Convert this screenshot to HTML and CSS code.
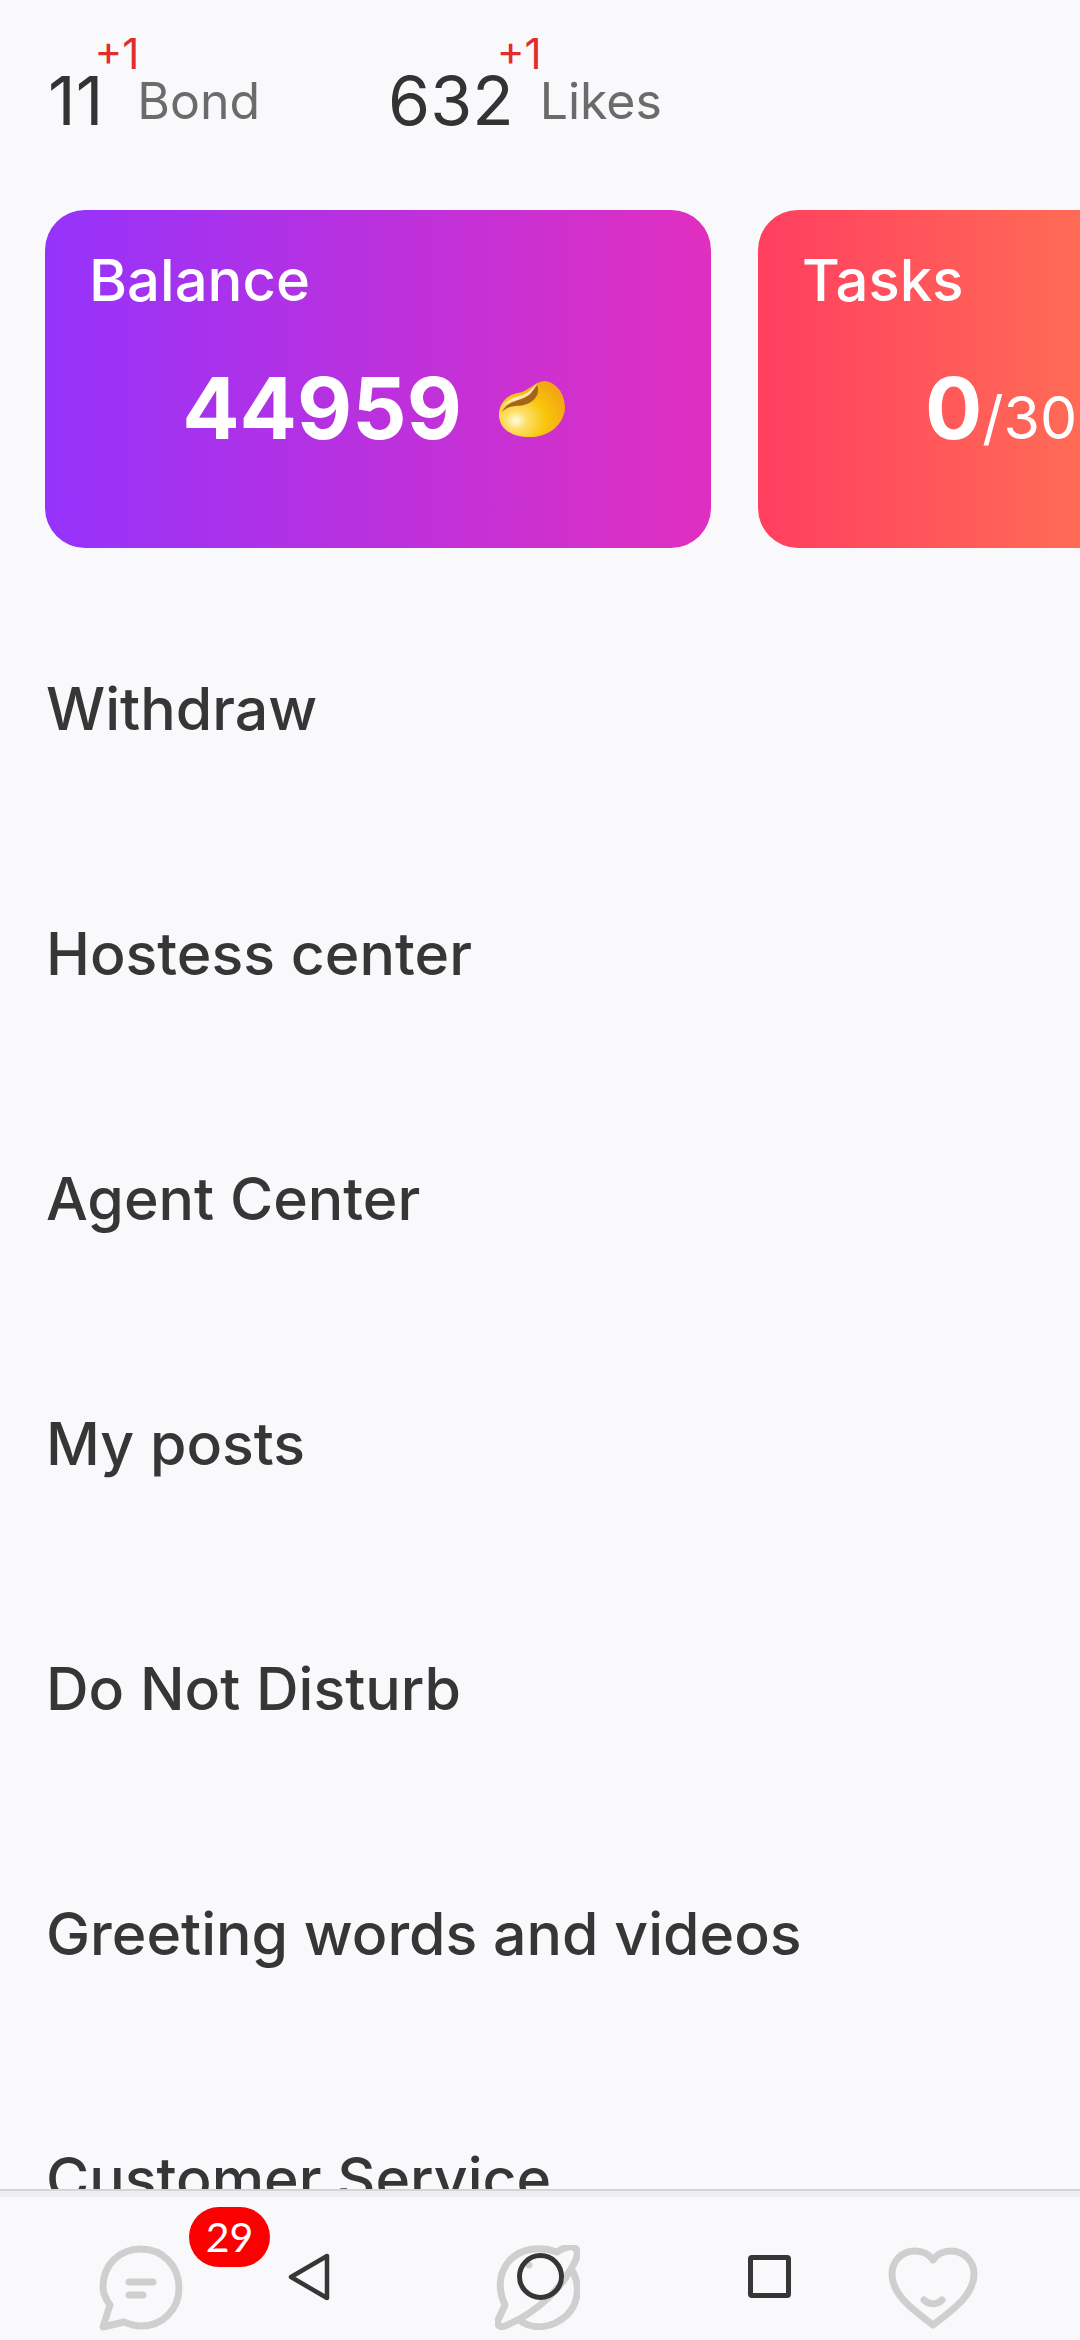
FILE: index.html
```html
<!DOCTYPE html>
<html lang="en">
<head>
  <meta charset="UTF-8">
  <meta name="viewport" content="width=device-width, initial-scale=1.0">
  <title>Profile</title>
  <link rel="stylesheet" href="styles.css">
</head>
<body>
  <div class="page">
    <div class="stats">
      <div class="stat stat-bond">
        <span class="stat-num">11<span class="stat-plus">+1</span></span>
        <span class="stat-label">Bond</span>
      </div>
      <div class="stat">
        <span class="stat-num">632<span class="stat-plus">+1</span></span>
        <span class="stat-label">Likes</span>
      </div>
    </div>

    <div class="cards">
      <div class="card card-balance">
        <div class="card-title">Balance</div>
        <div class="card-value">
          <span class="card-num">44959</span>
          <svg class="bean" width="68" height="58" viewBox="0 0 68 58">
            <defs>
              <radialGradient id="beanFill" cx="0.26" cy="0.7" r="0.8">
                <stop offset="0" stop-color="#fffbe8"/>
                <stop offset="0.2" stop-color="#fde06a"/>
                <stop offset="0.55" stop-color="#f8c60c"/>
                <stop offset="1" stop-color="#f3a612"/>
              </radialGradient>
            </defs>
            <path d="M46 1C58 2 67 13 67 28C66 44 52 56 35 57C16 58 1 50 1 35C1 24 8 15 20 13C30 12 34 3 46 1Z" fill="url(#beanFill)"/>
            <path d="M3 29C8 19 18 17 25 15C31 13 34 8 39 4C37 10 33 14 27 17C19 21 9 21 3 29Z" fill="#fbe9c4"/>
            <path d="M4 32C8 23 18 21 26 18C33 15 35 10 39 5C42 11 39 18 33 22C26 27 18 25 12 27C8 28 6 30 4 32Z" fill="#a5641a"/>
          </svg>
        </div>
      </div>
      <div class="card card-tasks">
        <div class="card-title">Tasks</div>
        <div class="card-value">
          <span class="card-num">0</span><span class="card-total">/30</span>
        </div>
      </div>
    </div>

    <ul class="menu">
      <li>Withdraw</li>
      <li>Hostess center</li>
      <li>Agent Center</li>
      <li>My posts</li>
      <li>Do Not Disturb</li>
      <li>Greeting words and videos</li>
      <li>Customer Service</li>
    </ul>
  </div>

  <div class="tabbar">
    <div class="tab">
      <svg width="84" height="86" viewBox="0 0 84 86" fill="none" stroke="#cfcfcf" stroke-width="7" stroke-linecap="round" stroke-linejoin="round">
        <path d="M11 60C6 53 4 47 4 42C4 20 20 4 42 4C64 4 80 21 80 43C80 65 63 81 42 81C35 81 30 79 25 77L4 82L11 60Z"/>
        <path d="M30 37H54M30 50H44"/>
      </svg>
      <span class="tab-badge">29</span>
    </div>
    <div class="tab">
      <svg width="85" height="85" viewBox="0 0 85 85" fill="none" stroke="#cfcfcf" stroke-width="7" stroke-linecap="round" stroke-linejoin="round">
        <path d="M10 60C3 45 3 28 15 15C27 3 45 1 62 7C68 3 76 0 80 3C85 7 82 14 76 24C66 42 44 67 10 81C4 83 2 80 3 75L10 60Z"/>
        <path d="M78 27C85 40 84 58 72 70C58 83 40 85 27 77"/>
        <circle cx="34" cy="20" r="3.5" fill="#cfcfcf" stroke="none"/>
      </svg>
    </div>
    <div class="tab">
      <svg width="90" height="82" viewBox="0 0 90 82" fill="none" stroke="#cfcfcf" stroke-width="7" stroke-linecap="round" stroke-linejoin="round">
        <path d="M45 78C30 66 4 50 4 27C4 14 14 4 27 4C34 4 41 7 45 13C49 7 56 4 63 4C76 4 86 14 86 27C86 50 60 66 45 78Z"/>
        <path d="M36 53C41 58 49 58 54 53"/>
      </svg>
    </div>
  </div>

  <div class="sysnav">
    <svg width="42" height="48" viewBox="0 0 42 48" fill="none" stroke="#363636" stroke-width="4.5" stroke-linejoin="round"><path d="M39 3V45L3 24Z"/></svg>
    <span class="nav-circle"></span>
    <span class="nav-square"></span>
  </div>
</body>
</html>
```

FILE: styles.css
```css
html, body {
  margin: 0;
  padding: 0;
}

body {
  width: 1080px;
  height: 2340px;
  overflow: hidden;
  position: relative;
  background: #f9f9fc;
  font-family: Inter, "Liberation Sans", sans-serif;
}

.page {
  height: 2189px;
  overflow: hidden;
}

.stats {
  display: flex;
  padding: 69px 0 0 48px;
  height: 71px;
}

.stat {
  display: flex;
  align-items: flex-end;
  height: 62px;
}

.stat-bond {
  width: 340px;
}

.stat-num {
  position: relative;
  font-size: 68px;
  line-height: 62px;
  color: #333;
}

.stat-bond .stat-num {
  padding-right: 8px;
}

.stat-plus {
  position: absolute;
  right: -28px;
  top: -36px;
  font-size: 42px;
  line-height: 42px;
  color: #e02d2d;
}

.stat-label {
  margin-left: 26px;
  font-size: 50px;
  line-height: 60px;
  color: #6b6b6b;
}

.cards {
  display: flex;
  gap: 47px;
  padding: 70px 0 0 45px;
}

.card {
  flex: none;
  width: 666px;
  height: 338px;
  box-sizing: border-box;
  border-radius: 40px;
  padding: 40px 44px;
  color: #fff;
}

.card-balance {
  background: linear-gradient(90deg, #9533fb, #e02fc0);
}

.card-tasks {
  background: linear-gradient(90deg, #ff3f60, #ff9a4a);
}

.card-title {
  font-size: 58px;
  line-height: 60px;
  font-weight: 500;
}

.card-value {
  display: flex;
  align-items: center;
  justify-content: center;
  gap: 36px;
  margin-top: 54px;
  height: 90px;
  padding-right: 8px;
}

.card-tasks .card-value {
  align-items: baseline;
  justify-content: flex-start;
  gap: 0;
  padding: 0 0 0 123px;
}

.card-num {
  font-size: 85px;
  line-height: 90px;
  font-weight: 700;
}

.card-total {
  font-size: 59px;
}

.bean {
  flex: none;
}

.menu {
  list-style: none;
  margin: 0;
  padding: 108px 0 0 46px;
}

.menu li {
  height: 245px;
  font-size: 59px;
  line-height: 106px;
  font-weight: 500;
  color: #363636;
}

.tabbar {
  position: absolute;
  left: 0;
  right: 0;
  top: 2189px;
  height: 151px;
  box-sizing: border-box;
  border-top: 2px solid #d4d4d6;
  background: #f9f9fc;
  display: flex;
  gap: 306px;
  padding: 54px 0 0 96px;
  box-shadow: inset 0 6px 0 #efeff1;
}

.tab {
  position: relative;
  width: 90px;
  height: 85px;
  display: flex;
  align-items: center;
  justify-content: center;
}

.tab-badge {
  position: absolute;
  left: 93px;
  top: -38px;
  width: 81px;
  height: 60px;
  border-radius: 30px;
  background: #fb0000;
  color: #fff;
  font-family: Lato, sans-serif;
  font-size: 41px;
  line-height: 60px;
  text-align: center;
}

.sysnav {
  position: absolute;
  left: 0;
  right: 0;
  top: 2253px;
  height: 48px;
  pointer-events: none;
}

.sysnav svg {
  position: absolute;
  left: 288px;
  top: 0;
}

.nav-circle {
  position: absolute;
  left: 517px;
  top: 0;
  width: 37px;
  height: 37px;
  border: 5px solid #363636;
  border-radius: 50%;
}

.nav-square {
  position: absolute;
  left: 748px;
  top: 2px;
  width: 33px;
  height: 33px;
  border: 5px solid #363636;
  border-radius: 4px;
}
```
